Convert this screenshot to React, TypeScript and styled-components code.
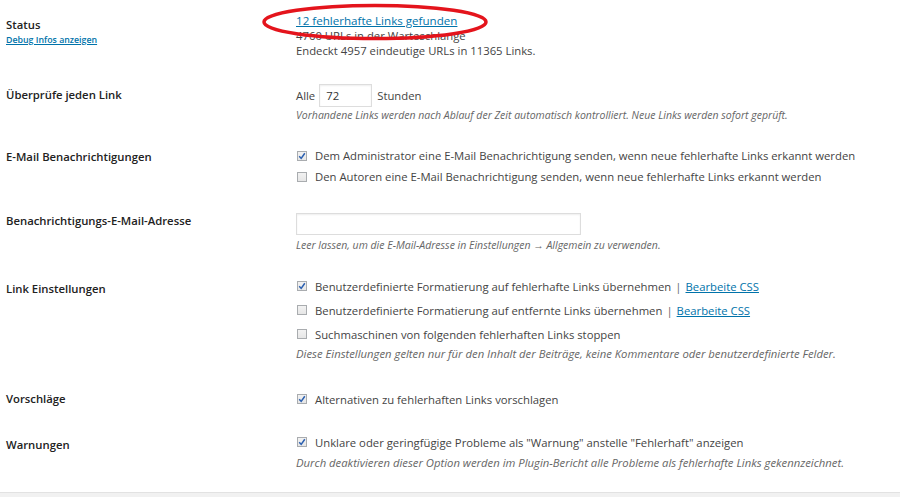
import styled, { createGlobalStyle } from 'styled-components'
import { ReactNode } from 'react'

const GlobalStyle = createGlobalStyle`
  html, body {
    margin: 0;
    padding: 0;
    background: #ffffff;
  }
  body {
    font-family: 'Open Sans', 'Liberation Sans', sans-serif;
    color: #444;
    font-size: 11.3px;
  }
`

const Page = styled.div`
  width: 900px;
  height: 497px;
  display: flex;
  flex-direction: column;
  overflow: hidden;
`

const Form = styled.div`
  flex: 1;
  display: flex;
  flex-direction: column;
`

const Row = styled.div<{ $mt: number }>`
  display: grid;
  grid-template-columns: 296px 1fr;
  margin-top: ${(p) => p.$mt}px;
  align-items: start;
`

const Label = styled.div<{ $lt: number }>`
  padding-left: 6px;
  margin-top: ${(p) => p.$lt}px;
  display: flex;
  flex-direction: column;
`

const LabelText = styled.span`
  font-size: 11.3px;
  line-height: 15px;
  font-weight: 600;
  color: #222;
`

const SmallLink = styled.a`
  font-size: 8.8px;
  line-height: 17px;
  font-weight: 600;
  color: #0073aa;
  text-decoration: underline;
`

const Content = styled.div`
  position: relative;
  display: flex;
  flex-direction: column;
`

const Line = styled.div`
  line-height: 15px;
  color: #444;
  white-space: nowrap;
`

const Link = styled.a`
  color: #0073aa;
  text-decoration: underline;
`

const StatusLink = styled(Link)`
  font-size: 11.6px;
`

const Description = styled.p<{ $mt: number; $size?: number }>`
  margin: ${(p) => p.$mt}px 0 0;
  font-size: ${(p) => p.$size ?? 10.5}px;
  line-height: 14px;
  font-style: italic;
  color: #666;
  white-space: nowrap;
`

const InlineField = styled.div`
  display: flex;
  align-items: center;
  height: 23px;
  gap: 4px;
`

const NumberInput = styled.input`
  width: 53px;
  height: 23px;
  box-sizing: border-box;
  border: 1px solid #ddd;
  box-shadow: inset 0 1px 2px rgba(0, 0, 0, 0.07);
  padding: 0 6px;
  font-family: inherit;
  font-size: 11.3px;
  color: #333;
  outline: none;
  margin-right: 1px;
`

const TextInput = styled.input`
  width: 285px;
  height: 22px;
  box-sizing: border-box;
  border: 1px solid #ddd;
  box-shadow: inset 0 1px 2px rgba(0, 0, 0, 0.07);
  padding: 0 6px;
  font-family: inherit;
  font-size: 11.3px;
  outline: none;
`

const CheckGroup = styled.div<{ $step: number }>`
  display: flex;
  flex-direction: column;
  & > label {
    height: ${(p) => p.$step}px;
  }
`

const CheckLabel = styled.label`
  display: flex;
  align-items: center;
  gap: 8px;
  padding-left: 1px;
  white-space: nowrap;
  line-height: 15px;
`

const Box = styled.span`
  width: 10px;
  height: 10px;
  box-sizing: border-box;
  border: 1px solid #a9acaf;
  background: linear-gradient(#f2f2f2, #e6e6e6);
  display: flex;
  align-items: center;
  justify-content: center;
  flex: none;

  svg {
    display: block;
  }
`

const Sep = styled.span`
  margin: 0 4px;
  color: #666;
`

const Ellipse = styled.svg`
  position: absolute;
  left: -35px;
  top: -12px;
  pointer-events: none;
`

const Footer = styled.div`
  height: 4px;
  border-top: 1px solid #e2e2e2;
  background: #f1f1f1;
`

const Check = ({ checked, children }: { checked?: boolean; children: ReactNode }) => (
  <CheckLabel>
    <Box>
      {checked && (
        <svg width="8" height="8" viewBox="0 0 8 8">
          <path d="M1.2 4.2 L3.2 6.4 L6.8 1.2" fill="none" stroke="#2a5fb0" strokeWidth="1.5" />
        </svg>
      )}
    </Box>
    <span>{children}</span>
  </CheckLabel>
)

export default function App() {
  return (
    <Page>
      <GlobalStyle />
      <Form>
        <Row $mt={13}>
          <Label $lt={4}>
            <LabelText>Status</LabelText>
            <SmallLink href="#">Debug Infos anzeigen</SmallLink>
          </Label>
          <Content>
            <Line>
              <StatusLink href="#">12 fehlerhafte Links gefunden</StatusLink>
            </Line>
            <Line>4760 URLs in der Warteschlange</Line>
            <Line>Endeckt 4957 eindeutige URLs in 11365 Links.</Line>
            <Ellipse width="234" height="44" viewBox="0 0 234 44">
              <ellipse cx="114" cy="21" rx="111" ry="16.5" fill="none" stroke="#e4141c" strokeWidth="3.5" />
            </Ellipse>
          </Content>
        </Row>

        <Row $mt={26}>
          <Label $lt={3}>
            <LabelText>Überprüfe jeden Link</LabelText>
          </Label>
          <Content>
            <InlineField>
              <span>Alle</span>
              <NumberInput defaultValue="72" />
              <span>Stunden</span>
            </InlineField>
            <Description $mt={1}>
              Vorhandene Links werden nach Ablauf der Zeit automatisch kontrolliert. Neue Links werden sofort geprüft.
            </Description>
          </Content>
        </Row>

        <Row $mt={23}>
          <Label $lt={4}>
            <LabelText>E-Mail Benachrichtigungen</LabelText>
          </Label>
          <Content>
            <CheckGroup $step={21}>
              <Check checked>
                Dem Administrator eine E-Mail Benachrichtigung senden, wenn neue fehlerhafte Links erkannt werden
              </Check>
              <Check>Den Autoren eine E-Mail Benachrichtigung senden, wenn neue fehlerhafte Links erkannt werden</Check>
            </CheckGroup>
          </Content>
        </Row>

        <Row $mt={26}>
          <Label $lt={0}>
            <LabelText>Benachrichtigungs-E-Mail-Adresse</LabelText>
          </Label>
          <Content>
            <TextInput />
            <Description $mt={3}>
              Leer lassen, um die E-Mail-Adresse in Einstellungen → Allgemein zu verwenden.
            </Description>
          </Content>
        </Row>

        <Row $mt={22}>
          <Label $lt={7}>
            <LabelText>Link Einstellungen</LabelText>
          </Label>
          <Content>
            <CheckGroup $step={24}>
              <Check checked>
                Benutzerdefinierte Formatierung auf fehlerhafte Links übernehmen<Sep>|</Sep>
                <Link href="#">Bearbeite CSS</Link>
              </Check>
              <Check>
                Benutzerdefinierte Formatierung auf entfernte Links übernehmen<Sep>|</Sep>
                <Link href="#">Bearbeite CSS</Link>
              </Check>
              <Check>Suchmaschinen von folgenden fehlerhaften Links stoppen</Check>
            </CheckGroup>
            <Description $mt={1} $size={11.3}>
              Diese Einstellungen gelten nur für den Inhalt der Beiträge, keine Kommentare oder benutzerdefinierte Felder.
            </Description>
          </Content>
        </Row>

        <Row $mt={26}>
          <Label $lt={4}>
            <LabelText>Vorschläge</LabelText>
          </Label>
          <Content>
            <CheckGroup $step={24}>
              <Check checked>Alternativen zu fehlerhaften Links vorschlagen</Check>
            </CheckGroup>
          </Content>
        </Row>

        <Row $mt={19}>
          <Label $lt={7}>
            <LabelText>Warnungen</LabelText>
          </Label>
          <Content>
            <CheckGroup $step={24}>
              <Check checked>Unklare oder geringfügige Probleme als "Warnung" anstelle "Fehlerhaft" anzeigen</Check>
            </CheckGroup>
            <Description $mt={2} $size={11.3}>
              Durch deaktivieren dieser Option werden im Plugin-Bericht alle Probleme als fehlerhafte Links gekennzeichnet.
            </Description>
          </Content>
        </Row>
      </Form>
      <Footer />
    </Page>
  )
}
